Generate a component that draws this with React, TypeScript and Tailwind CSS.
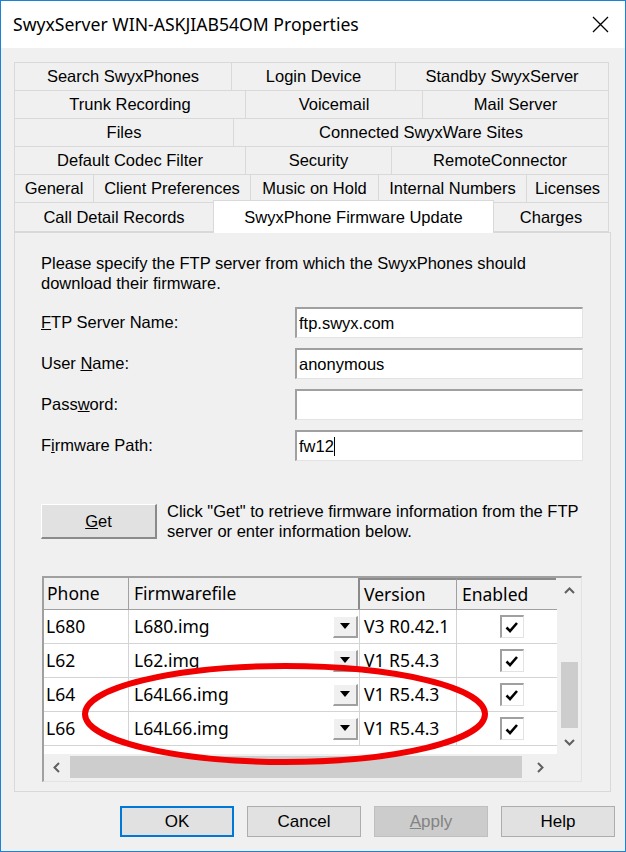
import React from "react";

function Tab({ label, w, h = "h-[28px]" }: { label: string; w: string; h?: string }) {
  return (
    <div className={`${w} ${h} flex items-center justify-center border-r border-b border-[#d9d9d9] text-black`}>
      {label}
    </div>
  );
}

function Input({ value, caret }: { value: string; caret?: boolean }) {
  return (
    <div className="w-[288px] h-[31px] bg-white border-t-2 border-l-2 border-[#a0a0a0] border-r border-b border-r-[#e3e3e3] border-b-[#e3e3e3] flex items-center pl-[2px] text-[16.5px] text-black">
      {value}
      {caret && <span className="inline-block w-px h-[19px] bg-black" />}
    </div>
  );
}

function Check() {
  return (
    <div className="w-[24px] h-[23px] bg-white border-t-2 border-l-2 border-[#a0a0a0] border-r border-b border-r-[#e3e3e3] border-b-[#e3e3e3] flex items-center justify-center">
      <svg width="16" height="14" viewBox="0 0 16 14">
        <path d="M2.5 7.5 L6 11 L13 3" fill="none" stroke="#000" strokeWidth="2.6" />
      </svg>
    </div>
  );
}

function DropBtn() {
  return (
    <div className="w-[25px] h-[22px] bg-[#f0f0f0] border-t border-l border-white border-r-2 border-b-2 border-r-[#a0a0a0] border-b-[#a0a0a0] flex items-center justify-center">
      <svg width="10" height="6" viewBox="0 0 10 6">
        <polygon points="0,0 10,0 5,6" fill="#000" />
      </svg>
    </div>
  );
}

function Row({ phone, file, ver }: { phone: string; file: string; ver: string }) {
  return (
    <div className="flex h-[34px] border-b border-[#d4d4d4] bg-white">
      <div className="w-[85px] border-r border-[#d4d4d4] flex items-center pl-[2px]">{phone}</div>
      <div className="w-[231px] border-r border-[#d4d4d4] flex items-center justify-between pl-[5px] pr-[1px]">
        <span>{file}</span>
        <DropBtn />
      </div>
      <div className="w-[97px] border-r border-[#d4d4d4] flex items-center pl-[4px]">{ver}</div>
      <div className="w-[99px] flex items-center justify-center pl-[10px]">
        <Check />
      </div>
    </div>
  );
}

function Chevron({ dir }: { dir: "up" | "down" | "left" | "right" }) {
  const pts =
    dir === "up" ? "1,7 5.5,2.5 10,7" : dir === "down" ? "1,2 5.5,6.5 10,2" : dir === "left" ? "7,1 2.5,5.5 7,10" : "3,1 7.5,5.5 3,10";
  const w = dir === "up" || dir === "down" ? 11 : 10;
  const h = dir === "up" || dir === "down" ? 9 : 11;
  return (
    <svg width={w} height={h} viewBox={`0 0 ${w} ${h}`}>
      <polyline points={pts} fill="none" stroke="#606060" strokeWidth="2" />
    </svg>
  );
}

function Btn({ children, kind }: { children: React.ReactNode; kind?: "default" | "disabled" }) {
  const cls =
    kind === "default"
      ? "border-2 border-[#0078d7] bg-[#e1e1e1] text-black"
      : kind === "disabled"
      ? "border border-[#bfbfbf] bg-[#cccccc] text-[#838383]"
      : "border border-[#adadad] bg-[#e1e1e1] text-black";
  return <div className={`w-[114px] h-[31px] flex items-center justify-center ${cls}`}>{children}</div>;
}

export default function App() {
  return (
    <div className="relative w-[626px] h-[852px] border border-[#1883d7] bg-[#f0f0f0] flex flex-col font-['Liberation_Sans',Arial,sans-serif] text-[16.5px] text-black overflow-hidden">
      {/* Title bar */}
      <div className="h-[47px] bg-white flex items-center justify-between pl-[12px] pr-[16px]">
        <span className="font-['Noto_Sans',sans-serif] text-[17.6px] text-black">SwyxServer WIN-ASKJIAB54OM Properties</span>
        <svg width="17" height="17" viewBox="0 0 17 17">
          <path d="M1 1 L16 16 M16 1 L1 16" stroke="#000" strokeWidth="1.3" />
        </svg>
      </div>

      {/* Body */}
      <div className="flex-1 flex flex-col pt-[14px] pl-[13px] pr-[10px] pb-[14px]">
        {/* Tabs */}
        <div className="flex flex-col w-[595px]">
          <div className="flex border-l border-t border-[#d9d9d9]">
            <Tab label="Search SwyxPhones" w="w-[217px]" />
            <Tab label="Login Device" w="w-[164px]" />
            <Tab label="Standby SwyxServer" w="w-[213px]" />
          </div>
          <div className="flex border-l border-[#d9d9d9]">
            <Tab label="Trunk Recording" w="w-[231px]" />
            <Tab label="Voicemail" w="w-[177px]" />
            <Tab label="Mail Server" w="w-[186px]" />
          </div>
          <div className="flex border-l border-[#d9d9d9]">
            <Tab label="Files" w="w-[219px]" />
            <Tab label="Connected SwyxWare Sites" w="w-[375px]" />
          </div>
          <div className="flex border-l border-[#d9d9d9]">
            <Tab label="Default Codec Filter" w="w-[231px]" />
            <Tab label="Security" w="w-[146px]" />
            <Tab label="RemoteConnector" w="w-[217px]" />
          </div>
          <div className="flex border-l border-[#d9d9d9]">
            <Tab label="General" w="w-[79px]" />
            <Tab label="Client Preferences" w="w-[157px]" />
            <Tab label="Music on Hold" w="w-[128px]" />
            <Tab label="Internal Numbers" w="w-[148px]" />
            <Tab label="Licenses" w="w-[82px]" />
          </div>
          <div className="flex items-end h-[29px] border-l border-[#d9d9d9]">
            <Tab label="Call Detail Records" w="w-[199px]" h="h-[29px]" />
            <div className="relative z-10 w-[281px] h-[33px] -mb-px bg-white border-l border-r border-t border-[#d9d9d9] -ml-px flex items-start justify-center pt-[4px]">
              SwyxPhone Firmware Update
            </div>
            <Tab label="Charges" w="w-[115px]" h="h-[29px]" />
          </div>
        </div>

        {/* Panel */}
        <div className="w-[597px] h-[560px] border border-[#d9d9d9] bg-[#f0f0f0] flex flex-col pl-[26px] pt-[20px]">
          <p className="leading-[20px] w-[540px]">
            Please specify the FTP server from which the SwyxPhones should
            <br />
            download their firmware.
          </p>

          <div className="mt-[14px] flex flex-col gap-[10px]">
            <div className="flex items-center">
              <div className="w-[254px]"><u>F</u>TP Server Name:</div>
              <Input value="ftp.swyx.com" />
            </div>
            <div className="flex items-center">
              <div className="w-[254px]">User <u>N</u>ame:</div>
              <Input value="anonymous" />
            </div>
            <div className="flex items-center">
              <div className="w-[254px]">Pass<u>w</u>ord:</div>
              <Input value="" />
            </div>
            <div className="flex items-center">
              <div className="w-[254px]">F<u>i</u>rmware Path:</div>
              <Input value="fw12" caret />
            </div>
          </div>

          <div className="mt-[43px] flex items-start">
            <div className="w-[116px] h-[35px] bg-[#e1e1e1] border-t border-l border-white border-r-2 border-b-2 border-r-[#8a8a8a] border-b-[#8a8a8a] flex items-center justify-center">
              <span><u>G</u>et</span>
            </div>
            <p className="ml-[10px] -mt-[3px] leading-[20px]">
              Click &quot;Get&quot; to retrieve firmware information from the FTP
              <br />
              server or enter information below.
            </p>
          </div>

          {/* Table */}
          <div className="mt-[35px] ml-px w-[540px] h-[206px] border-t-2 border-l-2 border-[#a0a0a0] border-r border-b border-r-[#e3e3e3] border-b-[#e3e3e3] flex flex-col font-['Noto_Sans',sans-serif] text-[17.5px]">
            <div className="flex h-[176px]">
              <div className="w-[513px] flex flex-col bg-white">
                <div className="flex h-[32px] bg-[#f0f0f0] border-b border-[#a0a0a0]">
                  <div className="w-[85px] border-r border-[#a0a0a0] flex items-center pl-[3px]">Phone</div>
                  <div className="w-[231px] border-r-2 border-[#8a8a8a] flex items-center pl-[5px]">Firmwarefile</div>
                  <div className="w-[97px] border-r border-t-2 border-[#a0a0a0] border-t-[#8a8a8a] flex items-center pl-[4px]">Version</div>
                  <div className="w-[99px] border-t-2 border-[#8a8a8a] flex items-center pl-[5px]">Enabled</div>
                </div>
                <Row phone="L680" file="L680.img" ver="V3 R0.42.1" />
                <Row phone="L62" file="L62.img" ver="V1 R5.4.3" />
                <Row phone="L64" file="L64L66.img" ver="V1 R5.4.3" />
                <Row phone="L66" file="L64L66.img" ver="V1 R5.4.3" />
              </div>
              <div className="w-[24px] bg-[#f0f0f0] flex flex-col items-center">
                <div className="h-[24px] flex items-center justify-center"><Chevron dir="up" /></div>
                <div className="mt-[60px] w-[17px] h-[66px] bg-[#cdcdcd]" />
                <div className="mt-auto h-[24px] flex items-center justify-center"><Chevron dir="down" /></div>
              </div>
            </div>
            <div className="flex h-[26px] bg-[#f0f0f0]">
              <div className="w-[513px] flex items-center">
                <div className="w-[26px] flex items-center justify-center"><Chevron dir="left" /></div>
                <div className="w-[452px] h-[22px] bg-[#cdcdcd]" />
                <div className="flex-1 flex items-center justify-center"><Chevron dir="right" /></div>
              </div>
              <div className="w-[24px]" />
            </div>
          </div>
        </div>

        {/* Buttons */}
        <div className="mt-[14px] flex justify-end gap-[13px] text-[17px]">
          <Btn kind="default">OK</Btn>
          <Btn>Cancel</Btn>
          <Btn kind="disabled"><span><u>A</u>pply</span></Btn>
          <Btn>Help</Btn>
        </div>
      </div>

      {/* Red annotation ellipse */}
      <svg className="absolute left-0 top-0 pointer-events-none" width="626" height="852" viewBox="0 0 626 852">
        <ellipse cx="284" cy="713" rx="200" ry="48" fill="none" stroke="#f00000" strokeWidth="6" />
      </svg>
    </div>
  );
}
